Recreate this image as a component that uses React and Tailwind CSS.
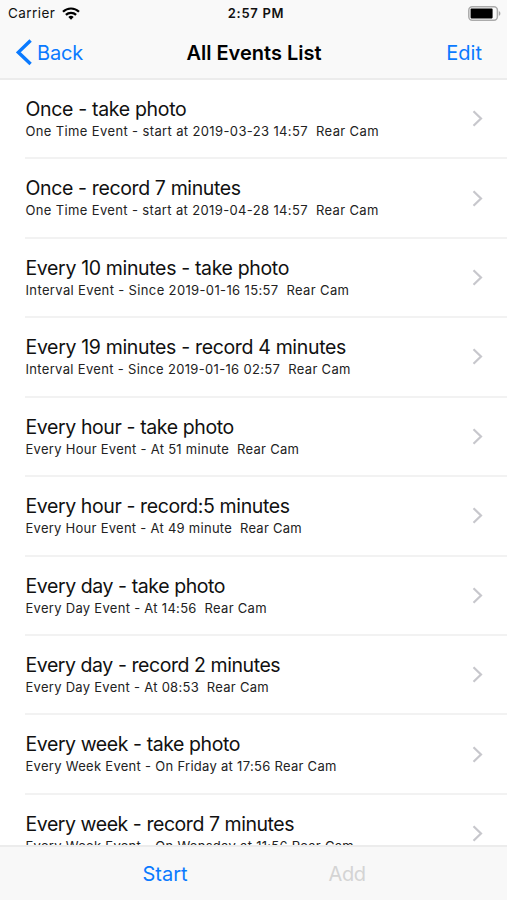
import React from 'react';
import clsx from 'clsx';

const EVENTS = [
  {
    title: 'Once - take photo',
    detail: 'One Time Event - start at 2019-03-23 14:57  Rear Cam',
    titleTracking: 'tracking-[-0.33px]',
    detailTracking: 'tracking-[0.37px]',
  },
  {
    title: 'Once - record 7 minutes',
    detail: 'One Time Event - start at 2019-04-28 14:57  Rear Cam',
    titleTracking: 'tracking-[-0.37px]',
    detailTracking: 'tracking-[0.36px]',
  },
  {
    title: 'Every 10 minutes - take photo',
    detail: 'Interval Event - Since 2019-01-16 15:57  Rear Cam',
    titleTracking: 'tracking-[-0.35px]',
    detailTracking: 'tracking-[0.36px]',
  },
  {
    title: 'Every 19 minutes - record 4 minutes',
    detail: 'Interval Event - Since 2019-01-16 02:57  Rear Cam',
    titleTracking: 'tracking-[-0.34px]',
    detailTracking: 'tracking-[0.33px]',
  },
  {
    title: 'Every hour - take photo',
    detail: 'Every Hour Event - At 51 minute  Rear Cam',
    titleTracking: 'tracking-[-0.39px]',
    detailTracking: 'tracking-[0.28px]',
  },
  {
    title: 'Every hour - record:5 minutes',
    detail: 'Every Hour Event - At 49 minute  Rear Cam',
    titleTracking: 'tracking-[-0.4px]',
    detailTracking: 'tracking-[0.27px]',
  },
  {
    title: 'Every day - take photo',
    detail: 'Every Day Event - At 14:56  Rear Cam',
    titleTracking: 'tracking-[-0.42px]',
    detailTracking: 'tracking-[0.29px]',
  },
  {
    title: 'Every day - record 2 minutes',
    detail: 'Every Day Event - At 08:53  Rear Cam',
    titleTracking: 'tracking-[-0.44px]',
    detailTracking: 'tracking-[0.28px]',
  },
  {
    title: 'Every week - take photo',
    detail: 'Every Week Event - On Friday at 17:56 Rear Cam',
    titleTracking: 'tracking-[-0.43px]',
    detailTracking: 'tracking-[0.29px]',
  },
  {
    title: 'Every week - record 7 minutes',
    detail: 'Every Week Event - On Wensday at 11:56 Rear Cam',
    titleTracking: 'tracking-[-0.45px]',
    detailTracking: 'tracking-[0.29px]',
  },
];

function WifiIcon() {
  return (
    <svg width="18" height="13" viewBox="0 0 18 13" fill="none" stroke="#000" strokeWidth="2.2">
      <path d="M1 4.8a11.3 11.3 0 0 1 16 0" />
      <path d="M3.9 7.9a7.2 7.2 0 0 1 10.2 0" />
      <path d="M9 12.7 6.3 10a3.8 3.8 0 0 1 5.4 0Z" fill="#000" stroke="none" />
    </svg>
  );
}

function BatteryIcon() {
  return (
    <svg width="33" height="15" viewBox="0 0 33 15" fill="none">
      <rect x="0.8" y="0.8" width="28.6" height="13.4" rx="3.4" stroke="#ababab" strokeWidth="1.5" />
      <rect x="2.6" y="2.6" width="22" height="9.8" rx="0.8" fill="#000" />
      <path d="M30.8 5v4.8c1.1-.5 1.6-1.4 1.6-2.4S31.9 5.5 30.8 5Z" fill="#a6a6a6" />
    </svg>
  );
}

function StatusBar() {
  return (
    <div className="grid grid-cols-3 items-center h-[27px] pl-2 pr-[6px] text-[13.5px]">
      <div className="flex items-center gap-[7px]">
        <span className="tracking-[0.43px]">Carrier</span>
        <WifiIcon />
      </div>
      <span className="pl-[3px] pt-px text-center font-semibold tracking-[0.7px] text-[13px]">2:57 PM</span>
      <div className="flex justify-end">
        <BatteryIcon />
      </div>
    </div>
  );
}

function NavBar() {
  return (
    <div className="grid grid-cols-3 items-center h-[51px] pl-4 pr-[25px] text-xl text-[#0a7aff]">
      <button className="flex items-center gap-[5px]">
        <svg width="16" height="27" viewBox="0 0 16 27" fill="none" stroke="currentColor" strokeWidth="3.4">
          <path d="M14.6 1.5 2.3 13.3 14.6 25.1" />
        </svg>
        <span className="tracking-[-0.2px]">Back</span>
      </button>
      <h1 className="pl-[10px] text-center font-semibold whitespace-nowrap text-black">All Events List</h1>
      <button className="text-right">Edit</button>
    </div>
  );
}

function EventRow({ event }) {
  return (
    <li className="ml-[25px] flex h-[79.43px] shrink-0 items-center justify-between border-b-2 border-[#f2f2f2] pr-6">
      <div className="whitespace-pre pl-[0.5px] pt-[0.6px]">
        <p className={clsx('text-[19.5px] leading-6', event.titleTracking)}>{event.title}</p>
        <p className={clsx('text-[13px] leading-5 text-[#222]', event.detailTracking)}>{event.detail}</p>
      </div>
      <svg width="11" height="17" viewBox="0 0 11 17" fill="none" stroke="#c7c7cc" strokeWidth="2.2">
        <path d="M1.5 1.2 9 8.5 1.5 15.8" />
      </svg>
    </li>
  );
}

export default function App() {
  return (
    <div className="flex h-screen w-full flex-col overflow-hidden bg-white font-['Inter','Liberation_Sans',sans-serif] text-[#111]">
      <header className="h-20 shrink-0 border-b-2 border-[#ececec] bg-[#f9f9f9]">
        <StatusBar />
        <NavBar />
      </header>
      <ul className="flex min-h-0 flex-1 flex-col overflow-hidden">
        {EVENTS.map((event) => (
          <EventRow key={event.title} event={event} />
        ))}
      </ul>
      <footer className="grid h-[55px] shrink-0 grid-cols-2 border-t-2 border-[#ececec] bg-[#f8f8f8] pl-[74px] pr-[69px] text-xl">
        <button className="text-[#0a7aff]">Start</button>
        <button className="tracking-[-0.5px] text-[#d4d4d4]" disabled>Add</button>
      </footer>
    </div>
  );
}
